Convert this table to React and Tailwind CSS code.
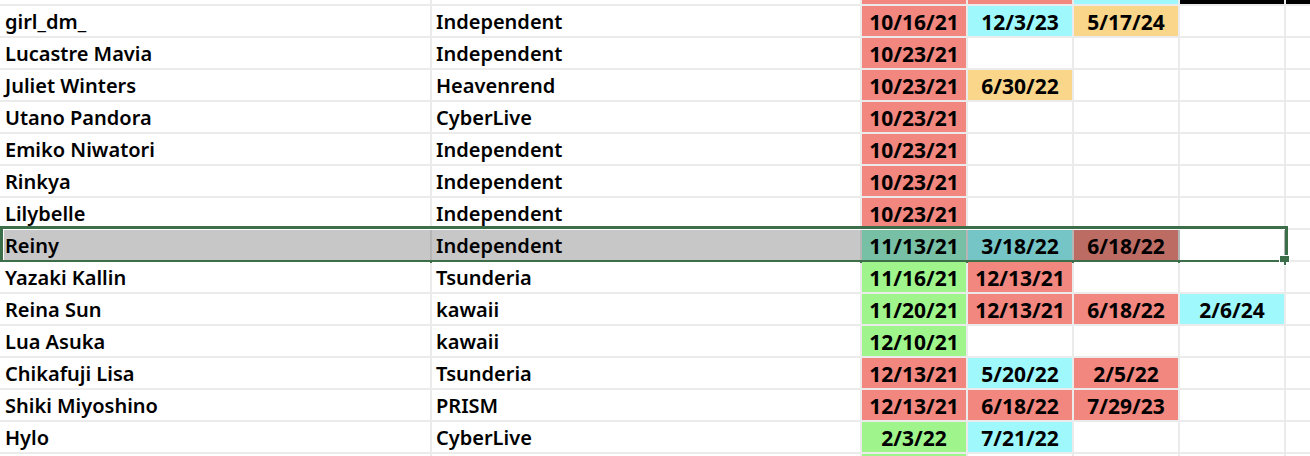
import React from "react";

const SALMON = "bg-[#f1877e]";
const CYAN = "bg-[#9ff9fc]";
const YELLOW = "bg-[#f9d68a]";
const GREEN = "bg-[#9ff58b]";

const rows = [
  { name: "girl_dm_", group: "Independent", dates: [["10/16/21", SALMON], ["12/3/23", CYAN], ["5/17/24", YELLOW]] },
  { name: "Lucastre Mavia", group: "Independent", dates: [["10/23/21", SALMON]] },
  { name: "Juliet Winters", group: "Heavenrend", dates: [["10/23/21", SALMON], ["6/30/22", YELLOW]] },
  { name: "Utano Pandora", group: "CyberLive", dates: [["10/23/21", SALMON]] },
  { name: "Emiko Niwatori", group: "Independent", dates: [["10/23/21", SALMON]] },
  { name: "Rinkya", group: "Independent", dates: [["10/23/21", SALMON]] },
  { name: "Lilybelle", group: "Independent", dates: [["10/23/21", SALMON]] },
  {
    name: "Reiny",
    group: "Independent",
    selected: true,
    dates: [["11/13/21", "bg-[#77c0a6]"], ["3/18/22", "bg-[#75c4c6]"], ["6/18/22", "bg-[#bd6c64]"]],
  },
  { name: "Yazaki Kallin", group: "Tsunderia", dates: [["11/16/21", GREEN], ["12/13/21", SALMON]] },
  { name: "Reina Sun", group: "kawaii", dates: [["11/20/21", GREEN], ["12/13/21", SALMON], ["6/18/22", SALMON], ["2/6/24", CYAN]] },
  { name: "Lua Asuka", group: "kawaii", dates: [["12/10/21", GREEN]] },
  { name: "Chikafuji Lisa", group: "Tsunderia", dates: [["12/13/21", SALMON], ["5/20/22", CYAN], ["2/5/22", SALMON]] },
  { name: "Shiki Miyoshino", group: "PRISM", dates: [["12/13/21", SALMON], ["6/18/22", SALMON], ["7/29/23", SALMON]] },
  { name: "Hylo", group: "CyberLive", dates: [["2/3/22", GREEN], ["7/21/22", CYAN]] },
];

const cols = "grid grid-cols-[430px_428px_104px_104px_104px_104px_24px] gap-x-[2px]";

function Row({ row }) {
  const cells = [0, 1, 2, 3].map((i) => row.dates[i]);
  const base = row.selected ? "bg-[#c7c7c7]" : "bg-white";
  return (
    <div className={`relative ${cols} h-[30px] ${row.selected ? "bg-[#b5b5b5]" : ""}`}>
      <div className={`${base} pl-[5px] pt-[2px] flex items-center font-semibold`}>{row.name}</div>
      <div className={`${base} pl-[4px] pt-[2px] flex items-center font-semibold`}>{row.group}</div>
      {cells.map((c, i) => (
        <div
          key={i}
          className={`${c ? c[1] : "bg-white"} pt-[2px] flex items-center justify-center font-bold text-[21px]`}
        >
          {c ? c[0] : ""}
        </div>
      ))}
      <div className="bg-white" />
      {row.selected && (
        <>
          <div className="absolute left-0 top-[-4px] w-[1288px] h-[37px] border-[3px] border-[#3b6e49] pointer-events-none">
            <div className="w-full h-full border border-white border-b-0 border-r-0" />
          </div>
          <div className="absolute left-[1279px] top-[25px] w-[11px] h-[11px] bg-[#3b6e49] border border-white" />
        </>
      )}
    </div>
  );
}

export default function App() {
  return (
    <div
      className="w-[1310px] h-[456px] overflow-hidden bg-[#ebebeb] flex flex-col gap-y-[2px] text-[20px] text-black leading-none"
      style={{ fontFamily: '"Noto Sans", "Open Sans", sans-serif' }}
    >
      <div className={`${cols} h-[4px] shrink-0`}>
        <div className="bg-white" />
        <div className="bg-white" />
        <div className={SALMON} />
        <div className={SALMON} />
        <div className={CYAN} />
        <div className="bg-black" />
        <div className="bg-black" />
      </div>
      {rows.map((r) => (
        <div key={r.name} className="shrink-0">
          <Row row={r} />
        </div>
      ))}
      <div className={`${cols} h-[2px] shrink-0`}>
        <div className="bg-white" />
        <div className="bg-white" />
        <div className={GREEN} />
        <div className="bg-white" />
        <div className="bg-white" />
        <div className="bg-white" />
        <div className="bg-white" />
      </div>
    </div>
  );
}
